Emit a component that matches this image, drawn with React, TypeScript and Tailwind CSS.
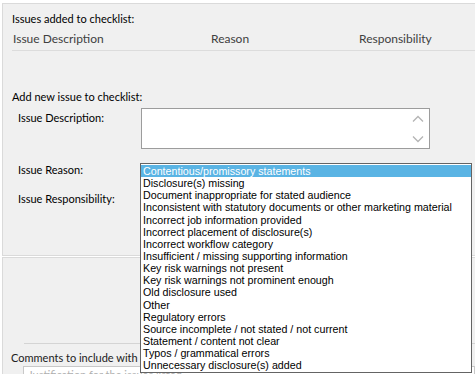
import React from "react";

const items = [
  "Contentious/promissory statements",
  "Disclosure(s) missing",
  "Document inappropriate for stated audience",
  "Inconsistent with statutory documents or other marketing material",
  "Incorrect job information provided",
  "Incorrect placement of disclosure(s)",
  "Incorrect workflow category",
  "Insufficient / missing supporting information",
  "Key risk warnings not present",
  "Key risk warnings not prominent enough",
  "Old disclosure used",
  "Other",
  "Regulatory errors",
  "Source incomplete / not stated / not current",
  "Statement / content not clear",
  "Typos / grammatical errors",
  "Unnecessary disclosure(s) added",
];

export default function App() {
  return (
    <div
      className="relative w-[475px] h-[374px] overflow-hidden bg-white text-black"
      style={{ fontFamily: 'Lato, "Noto Sans", sans-serif' }}
    >
      <div className="ml-[2px] mt-[3px] h-[253px] border-t border-l border-b border-[#dadada] bg-[#f0f0f0] text-[11px]">
        <div className="pl-[9px] pt-[7px] leading-[16px]">Issues added to checklist:</div>
        <div className="ml-[9px] mt-[4px] flex border-b border-[#dcdcdc] pb-[3px] text-[12px] leading-[16px] text-[#404040]">
          <div className="w-[199px] pl-[1px]">Issue Description</div>
          <div className="w-[148px]">Reason</div>
          <div>Responsibility</div>
        </div>
        <div className="pl-[9px] pt-[38px] leading-[16px]">Add new issue to checklist:</div>
        <div className="mt-[3px] flex">
          <div className="w-[138px] pl-[15px] pt-[2px] leading-[16px]">Issue Description:</div>
          <div className="relative h-[41px] w-[289px] border border-[#9c9c9c] bg-white">
            <svg className="absolute right-[5px] top-[6px]" width="12" height="8" viewBox="0 0 12 8">
              <path d="M1 6.5 L6 1.5 L11 6.5" stroke="#b4b4b4" strokeWidth="1.3" fill="none" />
            </svg>
            <svg className="absolute right-[5px] bottom-[5px]" width="12" height="8" viewBox="0 0 12 8">
              <path d="M1 1.5 L6 6.5 L11 1.5" stroke="#b4b4b4" strokeWidth="1.3" fill="none" />
            </svg>
          </div>
        </div>
        <div className="pl-[15px] pt-[13px] leading-[16px]">Issue Reason:</div>
        <div className="pl-[15px] pt-[13px] leading-[16px]">Issue Responsibility:</div>
      </div>
      <div className="ml-[2px] mt-[1px] h-[117px] border-l border-t border-[#dadada] bg-[#f0f0f0] text-[11px]">
        <div className="ml-[21px] mt-[85px] border-t border-[#d4d4d4]" />
        <div className="pl-[8px] pt-[6px] leading-[16px] text-[#202020]">Comments to include with your</div>
        <div className="ml-[20px] mt-[0px] h-[20px] border border-[#c8c8c8] bg-white pl-[4px] text-[11px] leading-[16px] text-[#b0b0b0]">
          Justification for the issues listed
        </div>
      </div>

      <div
        className="absolute left-[140px] top-[163px] w-[332px] h-[210px] border border-[#646464] bg-white pt-[1px] text-[10.7px] text-black"
        style={{ fontFamily: '"Liberation Sans", Arial, sans-serif' }}
      >
        {items.map((t, i) => (
          <div
            key={t}
            className={
              i === 0
                ? "h-[12.15px] leading-[12px] bg-[#5ab4e4] pl-[2px] text-white"
                : "h-[12.15px] leading-[12px] pl-[2px]"
            }
          >
            {t}
          </div>
        ))}
      </div>
    </div>
  );
}
